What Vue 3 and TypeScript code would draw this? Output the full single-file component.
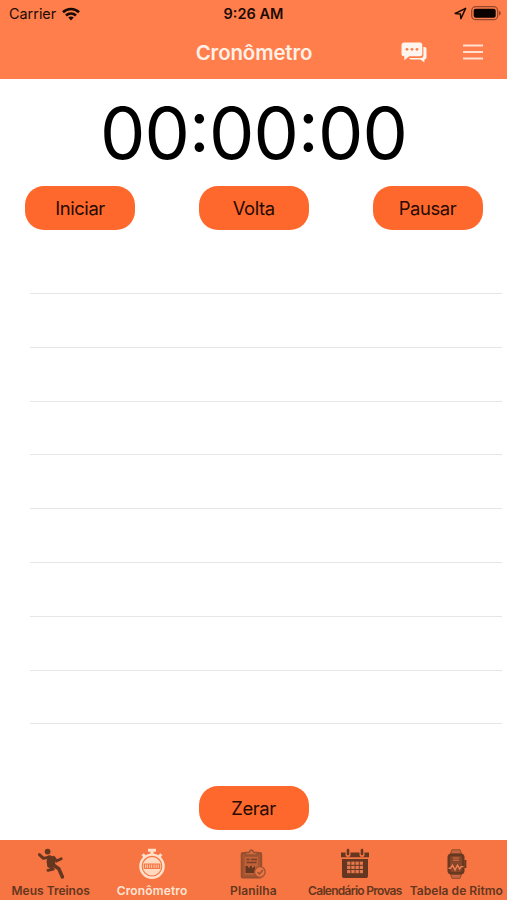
<script setup lang="ts">
import { ref } from 'vue'

type TabId = 'treinos' | 'cronometro' | 'planilha' | 'calendario' | 'ritmo'

interface Tab {
  id: TabId
  label: string
}

const tabs: Tab[] = [
  { id: 'treinos', label: 'Meus Treinos' },
  { id: 'cronometro', label: 'Cronômetro' },
  { id: 'planilha', label: 'Planilha' },
  { id: 'calendario', label: 'Calendário Provas' },
  { id: 'ritmo', label: 'Tabela de Ritmo' },
]

const active = ref<TabId>('cronometro')
const time = ref('00:00:00')
const actions: string[] = ['Iniciar', 'Volta', 'Pausar']
const laps = ref<string[]>(Array.from({ length: 9 }, () => ''))
</script>

<template>
  <div class="screen">
    <header class="header">
      <div class="status">
        <div class="carrier">
          <span>Carrier</span>
          <svg width="18" height="14" viewBox="0 0 18 14" fill="none" stroke="#1c0b05" stroke-width="2.7">
            <path d="M1 5.2C5.4 .9 12.6 .9 17 5.2" />
            <path d="M4 8.5C6.8 5.8 11.2 5.8 14 8.5" />
            <path d="M6.2 10.5C7.8 9 10.2 9 11.8 10.5L9 13.4Z" fill="#1c0b05" stroke="none" />
          </svg>
        </div>
        <strong class="clock">9:26 AM</strong>
        <div class="power">
          <svg width="13" height="13" viewBox="0 0 13 13" fill="none" stroke="#1c0b05" stroke-width="1.5" stroke-linejoin="round">
            <path d="M1.2 6.5L11.6 1.4L6.9 11.7L6.3 6.9Z" />
          </svg>
          <svg width="31" height="15" viewBox="0 0 31 15">
            <rect x=".7" y=".7" width="26" height="13" rx="4" fill="none" stroke="#97482c" stroke-width="1.3" />
            <rect x="2.7" y="2.7" width="22" height="9" rx="2" fill="#090201" />
            <path d="M28 4.8C30.4 5.6 30.4 8.8 28 9.6Z" fill="#97482c" />
          </svg>
        </div>
      </div>
      <div class="nav">
        <h1 class="title">Cronômetro</h1>
        <div class="tools">
          <svg width="26" height="21" viewBox="0 0 26 21">
            <path d="M22.4 5H23.6Q25.5 5 25.5 7V15.2Q25.5 17.4 23.4 17.4V20.4L19.4 17.4H10Q8.6 17.4 8.1 16H20Q22.4 16 22.4 13.5Z" fill="#fff5ef" />
            <path d="M2.8 .5H18.8Q21.3 .5 21.3 3V11.8Q21.3 14.3 18.8 14.3H8.2L3.3 18.3V14.3Q.5 14.3 .5 11.8V3Q.5 .5 2.8 .5Z" fill="#fff5ef" />
            <g fill="#ff7e4b"><circle cx="6" cy="7.3" r="1.4" /><circle cx="11" cy="7.3" r="1.4" /><circle cx="16" cy="7.3" r="1.4" /></g>
          </svg>
          <svg width="20" height="16" viewBox="0 0 20 16" stroke="#ffe0d2" stroke-width="2">
            <path d="M0 1.5H20M0 8H20M0 14.5H20" />
          </svg>
        </div>
      </div>
    </header>

    <main class="body">
      <div class="time">{{ time }}</div>
      <div class="actions">
        <button v-for="a in actions" :key="a" class="btn">{{ a }}</button>
      </div>
      <ul class="laps">
        <li v-for="(lap, i) in laps" :key="i" class="lap">{{ lap }}</li>
      </ul>
      <button class="btn reset">Zerar</button>
    </main>

    <nav class="tabs">
      <a v-for="t in tabs" :key="t.id" class="tab" :class="[t.id, { active: t.id === active }]" @click="active = t.id">
        <svg v-if="t.id === 'treinos'" class="icon" viewBox="0 0 32 32">
          <circle cx="12.6" cy="3.6" r="2.9" fill="#653720" />
          <path d="M13.6 8.6L19.6 9.8L19 18L13.4 18.4L12.6 13.5Z" fill="#653720" stroke="#653720" stroke-width="2" stroke-linejoin="round" />
          <g fill="none" stroke="#653720" stroke-width="2.9" stroke-linecap="round" stroke-linejoin="round">
            <path d="M15 8.8L8.4 10.4L4.4 6.6" />
            <path d="M18.6 9.4L21.6 13L26.2 10.8" />
            <path d="M14 17.5L18.2 21.2L13 22.4" />
            <path d="M18.4 17L23.8 20.8L27.4 29" stroke-width="3.5" />
          </g>
        </svg>
        <svg v-else-if="t.id === 'cronometro'" class="icon" viewBox="0 0 32 32" fill="none" stroke="#ffe0ca">
          <path d="M12 2.2H20M16 2V6M6.6 6.2L9 8.6M25.4 6.2L23 8.6" stroke-width="3" />
          <circle cx="16" cy="18.2" r="11.6" stroke-width="2.4" />
          <circle cx="16" cy="18.2" r="9.2" fill="#ffd9c0" stroke="none" />
          <rect x="7.7" y="15.4" width="16.6" height="5.6" rx="1" fill="#f67542" stroke="none" />
          <path d="M9.6 16.5V20M11.4 16.5V20M13.6 16.5V20M15.6 16.5V20M18 16.5V20M20.2 16.5V20M22.3 16.5V20" stroke="#ffc6a8" stroke-width="1.1" />
        </svg>
        <svg v-else-if="t.id === 'planilha'" class="icon" viewBox="0 0 32 32" fill="none" stroke="#97502f">
          <rect x="4.7" y="5" width="19.5" height="24.5" rx="1" fill="#a75431" stroke-width="2" />
          <rect x="7.6" y="9" width="13.6" height="17.5" fill="#c06038" stroke="none" />
          <path d="M8.5 7V4.5H11.8Q14.4 -.3 17 4.5H20.2V7Z" fill="#d36b40" stroke-width="1.5" />
          <path d="M9.5 11.5H12.5M14 11.5H20M9.5 14.5H19.5" stroke="#793e25" stroke-width="1.4" />
          <path d="M8.5 18H11V19.5H13V18H15V20.5L18 18V25H8.5Z" fill="#653620" stroke="none" />
          <circle cx="22.9" cy="24" r="5.3" fill="#e77445" stroke="#a35332" stroke-width="1.3" />
          <path d="M20.5 24L22.4 26L25.9 22" stroke-width="1.4" />
        </svg>
        <svg v-else-if="t.id === 'calendario'" class="icon" viewBox="0 0 32 32">
          <path d="M2 4.5H30V9.3H2ZM3 11H29V28.2Q29 30 27.2 30H4.8Q3 30 3 28.2Z" fill="#653720" />
          <path d="M9 2V6.5M23 2V6.5" stroke="#f67542" stroke-width="5" stroke-linecap="round" />
          <path d="M9 2V6M23 2V6" stroke="#653720" stroke-width="2.6" stroke-linecap="round" />
          <g fill="#e4774b">
            <template v-for="r in 3" :key="r">
              <rect v-for="c in 4" :key="c" :x="3.9 + c * 4.2" :y="9.4 + r * 4.2" width="3.3" height="3.2" />
            </template>
          </g>
        </svg>
        <svg v-else class="icon" viewBox="0 0 32 32">
          <path d="M10.5 6L12 1.8H20L21.5 6ZM10.5 26L12 30.3H20L21.5 26Z" fill="#c76540" stroke="#914b2e" />
          <rect x="7.5" y="5.5" width="17" height="21" rx="4" fill="#693820" />
          <path d="M25.3 12V20" stroke="#693820" stroke-width="2" />
          <rect x="10" y="8" width="12" height="16" rx="2" fill="#874629" />
          <path d="M13 10H19M13 12.3H19" stroke="#bf633e" stroke-width="1.4" />
          <path d="M8.5 20.2H10.5L12.5 17.2L15 22L17.5 17.2L19.6 21L21.2 18.6H23.5" fill="none" stroke="#f08051" stroke-width="1.4" />
        </svg>
        <span class="label">{{ t.label }}</span>
      </a>
    </nav>
  </div>
</template>

<style>
body { margin: 0; }
</style>

<style scoped>
.screen {
  display: flex;
  flex-direction: column;
  width: 507px;
  height: 900px;
  overflow: hidden;
  background: #fff;
  color: #000;
  font-family: Inter, "Liberation Sans", sans-serif;
}
.header {
  height: 79px;
  background: #ff7e4b;
  flex: none;
}
.status {
  display: grid;
  grid-template-columns: 1fr auto 1fr;
  align-items: center;
  height: 27px;
  padding: 0 5px 0 9px;
  color: #1c0b05;
  font-size: 14.4px;
  line-height: 27px;
}
.carrier, .power {
  display: flex;
  align-items: center;
  gap: 6px;
}
.power { justify-content: flex-end; gap: 4px; }
.clock {
  font-weight: 600;
  font-size: 14.5px;
  margin: 0 2px 0 -2px;
}
.nav {
  display: grid;
  grid-template-columns: 1fr auto 1fr;
  align-items: center;
  height: 50px;
}
.title {
  grid-column: 2;
  margin: 0 -1px 0 0;
  color: #fff0e8;
  font-size: 20.4px;
  font-weight: 600;
  letter-spacing: -0.1px;
}
.tools {
  display: flex;
  align-items: center;
  justify-content: flex-end;
  gap: 36px;
  padding-right: 24px;
}
.body {
  flex: 1;
  display: flex;
  flex-direction: column;
  align-items: center;
}
.time {
  height: 107px;
  line-height: 107px;
  font-size: 72px;
  letter-spacing: -0.85px;
  font-feature-settings: "calt" 1, "case" 1;
  white-space: nowrap;
}
.actions {
  display: flex;
  justify-content: space-between;
  align-self: stretch;
  padding: 0 24.5px 0 25px;
}
.btn {
  width: 110px;
  height: 44px;
  padding: 0;
  border: 0;
  border-radius: 19px;
  background: #ff682c;
  color: #260b02;
  font: 400 18.4px/44px Inter, "Liberation Sans", sans-serif;
  letter-spacing: -0.4px;
}
.laps {
  align-self: stretch;
  margin: 10.2px 5px 0 30px;
  padding: 0;
  list-style: none;
}
.lap {
  box-sizing: border-box;
  height: 53.8px;
  border-bottom: 1px solid #e6e6e6;
}
.reset { margin-top: 61.8px; }
.tabs {
  display: grid;
  grid-template-columns: repeat(5, minmax(0, 1fr));
  height: 60px;
  flex: none;
  background: #f67542;
}
.tab {
  display: flex;
  flex-direction: column;
  align-items: center;
  padding-top: 8px;
  color: #653720;
}
.icon { width: 32px; height: 32px; flex: none; }
.label {
  margin-top: 3px;
  font-size: 12px;
  line-height: 16px;
  font-weight: 600;
  white-space: nowrap;
}
.cronometro .label { letter-spacing: 0.15px; }
.planilha .label { letter-spacing: 0.15px; }
.calendario .label {
  font-weight: 600;
  letter-spacing: -0.72px;
}
.ritmo .label { letter-spacing: 0.05px; }
.active { color: #ffe4d4; }
</style>
